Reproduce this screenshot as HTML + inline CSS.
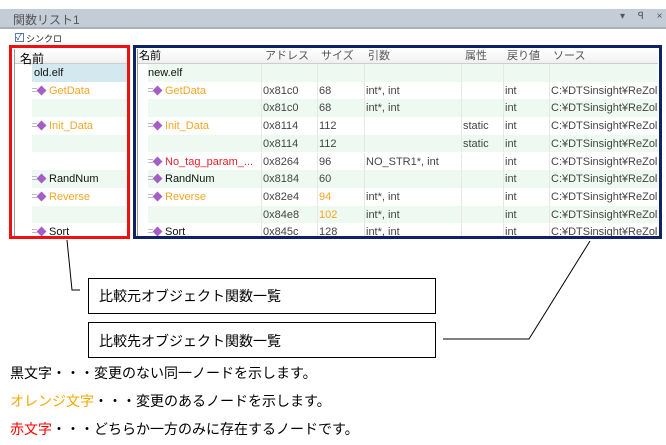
<!DOCTYPE html>
<html><head><meta charset="utf-8"><style>
*{margin:0;padding:0;box-sizing:border-box}
body{width:666px;height:445px;background:#fff;position:relative;overflow:hidden;font-family:"Liberation Sans","Noto Sans CJK JP",sans-serif;}
.a{position:absolute;white-space:nowrap}
.t{font-size:11px;color:#333;line-height:19px}
.o{color:#f5a623}.r{color:#e8202a}
.ic{display:inline-block;width:7px;height:7px;background:#a55ec8;transform:rotate(45deg);margin:0 4px 0 1px;vertical-align:0px}
.ic0{display:inline-block;width:5px;border-top:1px solid #bbb;border-bottom:1px solid #bbb;height:4px;vertical-align:2px}
.j{font-size:14px;color:#000}
</style></head><body>
<div class="a" style="left:0;top:9px;width:666px;height:20px;background:#c3ccd7;border-bottom:2px solid #a9b1ba"></div>
<div class="a" style="left:13px;top:11px;font-size:12px;color:#555">関数リスト1</div>
<div class="a" style="left:620px;top:11px;font-size:10px;color:#555;letter-spacing:5px">▾ ꟼ ×</div>
<div class="a" style="left:15px;top:33px;width:9px;height:9px;border:1px solid #5a7bab;background:#fff;font-size:9px;line-height:7px;color:#2050a0">✓</div>
<div class="a" style="left:26px;top:32px;font-size:9px;color:#222">シンクロ</div>

<div class="a" style="left:14px;top:49px;width:114px;height:187px;background:#fff;border-left:1px solid #999;overflow:hidden">
 <div class="a" style="left:0;top:0;width:114px;height:15px;background:linear-gradient(#fff,#f0f0f0);border-bottom:1px solid #ccc"></div>
 <div class="a" style="left:5px;top:1px;font-size:12px;color:#000">名前</div>
 <div id="L"></div>
</div>
<div class="a" style="left:137px;top:49px;width:521px;height:187px;background:#fff;border-left:1px solid #999;overflow:hidden">
 <div class="a" style="left:0;top:0;width:521px;height:15px;background:linear-gradient(#fff,#f0f0f0);border-bottom:1px solid #ccc"></div>
 <div class="a t" style="left:1px;top:-2px;color:#000">名前</div>
 <div class="a t" style="left:127px;top:-2px;color:#555">アドレス</div>
 <div class="a t" style="left:183px;top:-2px;color:#555">サイズ</div>
 <div class="a t" style="left:230px;top:-2px;color:#555">引数</div>
 <div class="a t" style="left:327px;top:-2px;color:#555">属性</div>
 <div class="a t" style="left:369px;top:-2px;color:#555">戻り値</div>
 <div class="a t" style="left:415px;top:-2px;color:#555">ソース</div>
 <div id="R"></div>
</div>
<div class="a" style="left:9px;top:45px;width:121px;height:194px;border:3px solid #f01010"></div>
<div class="a" style="left:133px;top:45px;width:529px;height:194px;border:3px solid #0c2366"></div>

<svg class="a" style="left:0;top:0" width="666" height="445">
<polyline points="67,240 72,290 80,290" fill="none" stroke="#000" stroke-width="1"/>
<polyline points="590,241 529,339 443,339" fill="none" stroke="#000" stroke-width="1"/>
</svg>
<div class="a" style="left:88px;top:278px;width:348px;height:36px;border:1px solid #000"></div>
<div class="a j" style="left:99px;top:286px">比較元オブジェクト関数一覧</div>
<div class="a" style="left:88px;top:322px;width:348px;height:36px;border:1px solid #000"></div>
<div class="a j" style="left:99px;top:331px">比較先オブジェクト関数一覧</div>
<div class="a j" style="left:10px;top:363px">黒文字・・・変更のない同一ノードを示します。</div>
<div class="a j" style="left:10px;top:391px"><span style="color:#f5a800">オレンジ文字</span>・・・変更のあるノードを示します。</div>
<div class="a j" style="left:10px;top:419px"><span style="color:#f00">赤文字</span>・・・どちらか一方のみに存在するノードです。</div>

<script>
var G='#eef9f1',W='#fff',ic='<span class="ic0"></span><span class="ic"></span>';
var L=[['old.elf','','#d4e8f0'],[ic+'<span class="o">GetData</span>','',W],['','',G],[ic+'<span class="o">Init_Data</span>','',W],['','',G],['','',W],[ic+'RandNum','',G],[ic+'<span class="o">Reverse</span>','',W],['','',G],[ic+'Sort','',W]];
var h='';
L.forEach(function(r,i){var y=15+i*17.7;h+='<div class="a" style="left:17px;top:'+y+'px;width:97px;height:17.7px;background:'+r[2]+'"></div><div class="a t" style="left:'+(r[0]=='old.elf'?19:17)+'px;top:'+y+'px;color:#111">'+r[0]+'</div>';});
document.getElementById('L').outerHTML=h;
var S='C:¥DTSinsight¥ReZol';
var R=[['new.elf','','','','','','',G],
[ic+'<span class="o">GetData</span>','0x81c0','68','int*, int','','int',S,W],
['','0x81c0','68','int*, int','','int',S,G],
[ic+'<span class="o">Init_Data</span>','0x8114','112','','static','int',S,W],
['','0x8114','112','','static','int',S,G],
[ic+'<span class="r">No_tag_param_...</span>','0x8264','96','NO_STR1*, int','','int',S,W],
[ic+'RandNum','0x8184','60','','','int',S,G],
[ic+'<span class="o">Reverse</span>','0x82e4','<span class="o">94</span>','int*, int','','int',S,W],
['','0x84e8','<span class="o">102</span>','int*, int','','int',S,G],
[ic+'Sort','0x845c','128','int*, int','','int',S,W]];
var X=[10,125,181,228,325,367,413];h='';
R.forEach(function(r,i){var y=15+i*17.7;h+='<div class="a" style="left:10px;top:'+y+'px;width:511px;height:17.7px;background:'+r[7]+'"></div>';
[0,1,2,3,4,5,6].forEach(function(c){if(c>0)h+='<div class="a" style="left:'+(X[c]-2)+'px;top:'+y+'px;width:1px;height:17.7px;background:#e6e6e6"></div>';h+='<div class="a t" style="left:'+X[c]+'px;top:'+y+'px;color:'+(c==0?'#111':'#444')+'">'+r[c]+'</div>';});});
document.getElementById('R').outerHTML=h;
</script>
</body></html>
